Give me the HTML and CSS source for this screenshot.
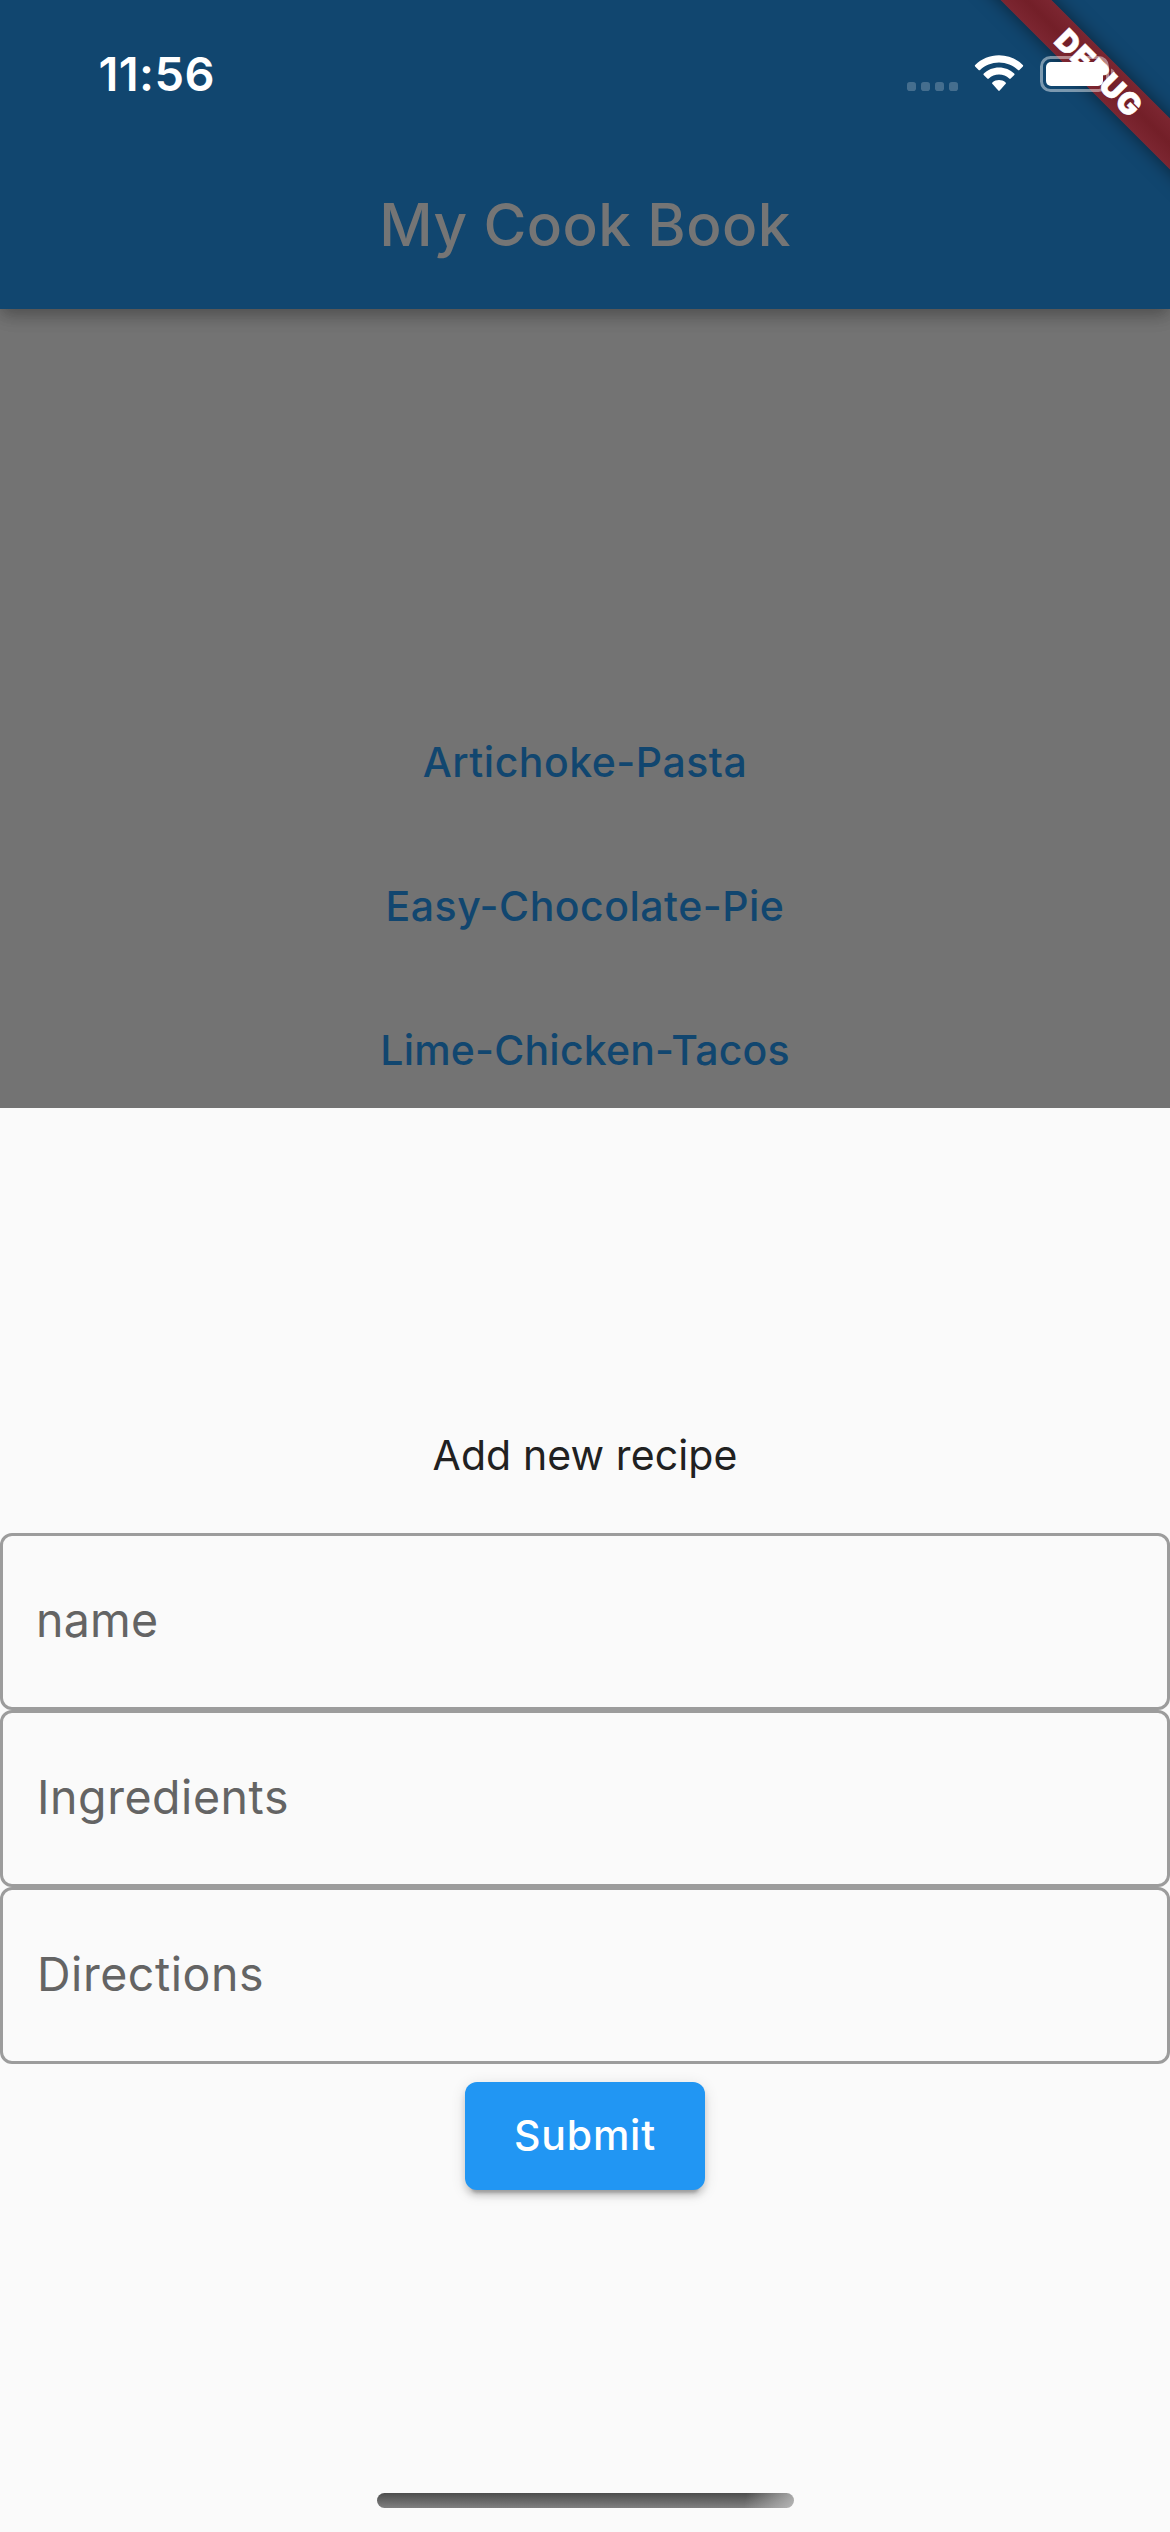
FILE: index.html
```html
<!DOCTYPE html>
<html lang="en">
<head>
<meta charset="utf-8">
<title>My Cook Book</title>
<link rel="stylesheet" href="styles.css">
</head>
<body>
<div class="screen">
  <header class="app-header">
    <div class="status-bar">
      <span class="clock">11:56</span>
      <svg class="status-icons" width="210" height="38" viewBox="906 55 210 38">
        <g fill="#fff" fill-opacity=".22">
          <rect x="907" y="82" width="9" height="9" rx="2.8"/>
          <rect x="921" y="82" width="9" height="9" rx="2.8"/>
          <rect x="935" y="82" width="9" height="9" rx="2.8"/>
          <rect x="949" y="82" width="9" height="9" rx="2.8"/>
        </g>
        <g fill="#fff">
          <path d="M999 62.400C1006.300 62.400 1012.900 65.200 1017.900 69.900Q1018.700 70.600 1019.400 69.900L1022.900 66.400Q1023.600 65.600 1022.800 64.900C1016.500 58.900 1008.200 55.300 999 55.300S981.500 58.900 975.200 64.900Q974.400 65.600 975.100 66.400L978.600 69.900Q979.300 70.600 980.100 69.900C985.100 65.200 991.700 62.400 999 62.400Z"/>
          <path d="M999 74.600C1003 74.600 1006.500 76.100 1009.200 78.600Q1010 79.300 1010.700 78.600L1014.300 75.100Q1015 74.300 1014.200 73.600C1010.200 69.900 1004.900 67.600 999 67.600S987.800 69.900 983.800 73.600Q983 74.300 983.700 75.100L987.300 78.600Q988 79.300 988.800 78.600C991.500 76.100 995 74.600 999 74.600Z"/>
          <path d="M1005.700 83.700Q1006.300 83 1005.600 82.400C1001.800 79.300 996.200 79.300 992.400 82.400Q991.700 83 992.300 83.700L998.300 90.600Q999 91.300 999.700 90.600Z"/>
        </g>
      </svg>
    </div>
    <h1 class="app-title">My Cook Book</h1>
  </header>

  <main class="recipes">
    <a class="recipe">Artichoke-Pasta</a>
    <a class="recipe">Easy-Chocolate-Pie</a>
    <a class="recipe recipe-long">Lime-Chicken-Tacos</a>
  </main>

  <section class="sheet">
    <h2 class="sheet-title">Add new recipe</h2>
    <form class="fields">
      <label class="field field-name">name</label>
      <label class="field">Ingredients</label>
      <label class="field">Directions</label>
      <button class="submit" type="button">Submit</button>
    </form>
    <div class="home-indicator"></div>
  </section>

  <div class="debug-corner"><div class="debug-banner">DEBUG</div></div>
  <svg class="battery" width="78" height="38" viewBox="1039 55 78 38">
    <rect x="1041.500" y="57.500" width="66" height="33" rx="9" fill="none" stroke="#fff" stroke-opacity=".45" stroke-width="3"/>
    <path d="M1111 68.500Q1115 70 1115 74T1111 79.500Z" fill="#fff" fill-opacity=".4"/>
    <rect x="1046" y="62" width="57" height="24" rx="5" fill="#fff"/>
  </svg>
</div>
</body>
</html>
```
FILE: styles.css
```css
* { box-sizing: border-box; }
body {
  margin: 0;
  font-family: Inter, "Liberation Sans", sans-serif;
  background: #fafafa;
}
h1, h2 { margin: 0; }
.screen {
  position: relative;
  width: 1170px;
  height: 2532px;
  display: flex;
  flex-direction: column;
  overflow: hidden;
}
.app-header {
  height: 309px;
  flex: none;
  background: #11466f;
  box-shadow: 0 6px 15px -3px rgba(0,0,0,.2), 0 9px 15px rgba(0,0,0,.1), 0 3px 24px rgba(0,0,0,.09);
  z-index: 1;
}
.status-bar {
  height: 141px;
  display: flex;
  align-items: flex-start;
  justify-content: space-between;
  padding: 54px 54px 0 98.500px;
}
.clock {
  font-size: 47px;
  line-height: 40px;
  font-weight: 600;
  letter-spacing: .4px;
  color: #fff;
}
.status-icons { margin-top: 1px; display: block; }
.app-title {
  height: 168px;
  line-height: 168px;
  text-align: center;
  font-size: 58.500px;
  font-weight: 500;
  color: #757575;
  letter-spacing: .4px;
}
.recipes {
  height: 798.500px;
  flex: none;
  display: flex;
  flex-direction: column;
  padding-top: 381px;
  background: #737373;
}
.recipe {
  height: 144px;
  flex: none;
  line-height: 144px;
  text-align: center;
  font-size: 41px;
  font-weight: 500;
  letter-spacing: .5px;
  color: #11466f;
}
.recipe-long { letter-spacing: .2px; }
.sheet {
  flex: 1;
  z-index: 1;
  background: #fafafa;
  display: flex;
  flex-direction: column;
}
.sheet-title {
  margin-top: 317.500px;
  height: 60px;
  line-height: 60px;
  text-align: center;
  font-size: 41px;
  font-weight: 400;
  letter-spacing: .1px;
  color: #212121;
}
.fields {
  margin-top: 48px;
  display: flex;
  flex-direction: column;
}
.field {
  height: 177px;
  padding: 0 34px 4px;
  display: flex;
  align-items: center;
  border: 3px solid #9c9c9c;
  border-radius: 12px;
  font-size: 46.500px;
  letter-spacing: .55px;
  color: #646464;
}
.field-name {
  padding-left: 33px;
  letter-spacing: .2px;
}
.submit {
  margin-top: 18px;
  align-self: center;
  width: 240px;
  height: 108px;
  padding: 0 0 2px;
  border: 0;
  border-radius: 12px;
  background: #2196f3;
  color: #fff;
  font: 500 41px Inter, sans-serif;
  letter-spacing: .8px;
  box-shadow: 0 9px 3px -6px rgba(0,0,0,.2), 0 6px 6px rgba(0,0,0,.14), 0 3px 15px rgba(0,0,0,.12);
}
.home-indicator {
  margin: auto auto 24px;
  width: 417px;
  height: 15px;
  border-radius: 8px;
  background: linear-gradient(100deg, transparent 88%, rgba(200,200,200,.75) 100%), linear-gradient(#4d4d4d, #808080);
}
.debug-corner {
  position: absolute;
  top: 0;
  right: 0;
  width: 300px;
  height: 300px;
  overflow: hidden;
  z-index: 2;
}
.debug-banner {
  position: absolute;
  left: 28px;
  top: 54px;
  width: 400px;
  height: 36px;
  padding-left: 3px;
  transform: rotate(45deg);
  background: linear-gradient(#7c2631, #731f28 50%, #7c2631);
  box-shadow: 0 0 18px rgba(0,0,0,.5);
  color: #fff;
  font-size: 30px;
  font-weight: 900;
  line-height: 36px;
  letter-spacing: .9px;
  -webkit-text-stroke: .7px #fff;
  text-align: center;
}
.battery {
  position: absolute;
  left: 1039px;
  top: 55px;
  z-index: 3;
}
```
